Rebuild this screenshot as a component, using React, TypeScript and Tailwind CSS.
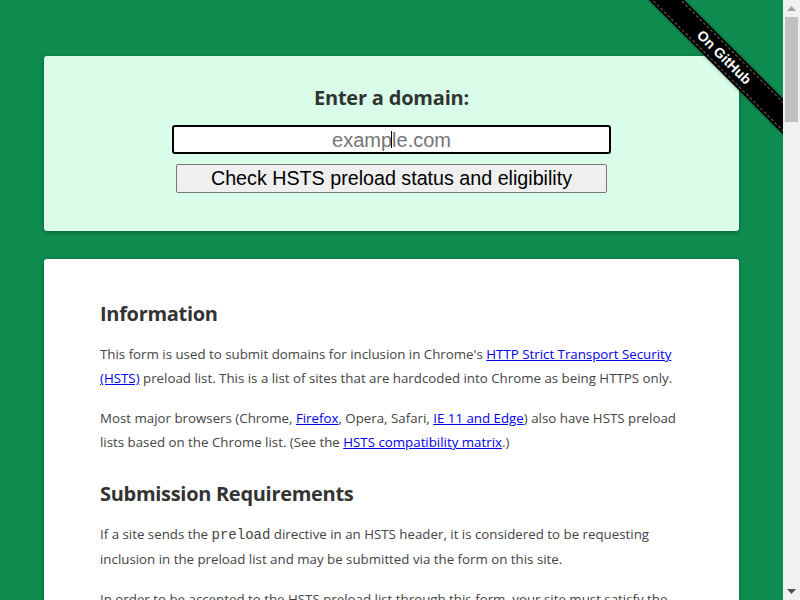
import React from "react";

const body = "font-['Open_Sans',sans-serif]";
const mono = "font-['Liberation_Mono',monospace] text-[14px]";

function A({ children }: { children: React.ReactNode }) {
  return <a href="#" className="text-[#0000ee] underline">{children}</a>;
}

function P({ children }: { children: React.ReactNode }) {
  return <p className="mt-[16px] text-[13.3px] leading-[24px] text-[#444]">{children}</p>;
}

function H2({ children, first }: { children: React.ReactNode; first?: boolean }) {
  return (
    <h2 className={`${first ? "" : "mt-[25px] "}text-[20px] tracking-[-0.3px] leading-[30px] font-bold text-[#333]`}>
      {children}
    </h2>
  );
}

function Scrollbar() {
  return (
    <div className="w-[17px] h-full bg-[#f1f1f1] flex flex-col items-center shrink-0">
      <div className="h-[17px] w-full flex items-center justify-center">
        <svg width="9" height="5" viewBox="0 0 9 5"><path d="M4.5 0L9 5H0z" fill="#a3a3a3" /></svg>
      </div>
      <div className="w-[13px] h-[105px] bg-[#c1c1c1]" />
      <div className="flex-1" />
      <div className="h-[17px] w-full flex items-center justify-center">
        <svg width="9" height="5" viewBox="0 0 9 5"><path d="M0 0H9L4.5 5z" fill="#505050" /></svg>
      </div>
    </div>
  );
}

export default function App() {
  return (
    <div className={`flex h-screen overflow-hidden ${body}`}>
      <div className="relative flex-1 h-full overflow-hidden bg-[#0f8c50]">
        <div className="pt-[56px] pb-[60px]">
          {/* Form card */}
          <div className="mx-[44px] rounded-[3px] bg-[#d9fde9] shadow-[0_1px_4px_rgba(0,0,0,0.35)] pt-[28px] pb-[38px] flex flex-col items-center">
            <h1 className="text-[20px] tracking-[-0.2px] leading-[28px] font-bold text-[#333]">Enter a domain:</h1>
            <div className="relative mt-[13px]">
              <input
                placeholder="example.com"
                className="block w-[439px] h-[29px] border-2 border-black rounded-[3px] bg-white text-center text-[20px] font-['Liberation_Sans',Arial,sans-serif] text-black placeholder:text-[#757575] outline-none"
              />
              <span className="absolute left-[219px] top-[6px] h-[17px] w-px bg-black pointer-events-none" />
            </div>
            <button className="mt-[10px] w-[431px] h-[29px] border border-[#767676] rounded-[2px] bg-[#efefef] text-[19.7px] leading-[27px] font-['Liberation_Sans',Arial,sans-serif] text-black">
              Check HSTS preload status and eligibility
            </button>
          </div>

          {/* Content card */}
          <div className="mx-[44px] mt-[28px] rounded-[3px] bg-white shadow-[0_1px_4px_rgba(0,0,0,0.35)] px-[56px] pt-[40px] pb-[48px]">
            <H2 first>Information</H2>
            <p className="mt-[13px] text-[13.3px] leading-[24px] text-[#444]">
              This form is used to submit domains for inclusion in Chrome's <A>HTTP Strict Transport Security (HSTS)</A> preload list. This is a list of sites that are hardcoded into Chrome as being HTTPS only.
            </p>
            <P>
              Most major browsers (Chrome, <A>Firefox</A>, Opera, Safari, <A>IE 11 and Edge</A>) also have HSTS preload lists based on the Chrome list. (See the <A>HSTS compatibility matrix</A>.)
            </P>

            <H2>Submission Requirements</H2>
            <p className="mt-[13px] text-[13.3px] leading-[24px] text-[#444]">
              If a site sends the <code className={mono}>preload</code> directive in an HSTS header, it is considered to be requesting inclusion in the preload list and may be submitted via the form on this site.
            </p>
            <P>
              In order to be accepted to the HSTS preload list through this form, your site must satisfy the following set of requirements:
            </P>
            <ol className="mt-[16px] list-decimal pl-[40px] text-[13.3px] leading-[24px] text-[#444]">
              <li>Serve a valid <strong>certificate</strong>.</li>
              <li><strong>Redirect</strong> from HTTP to HTTPS on the same host, if you are listening on port 80.</li>
              <li>Serve all <strong>subdomains</strong> over HTTPS.
                <ul className="list-disc pl-[40px]">
                  <li>In particular, you must support HTTPS for the <code className={mono}>www</code> subdomain if a DNS record for that subdomain exists.</li>
                </ul>
              </li>
              <li>Serve an <strong>HSTS header</strong> on the base domain for HTTPS requests:
                <ul className="list-disc pl-[40px]">
                  <li>The <code className={mono}>max-age</code> must be at least <code className={mono}>31536000</code> seconds (1 year).</li>
                  <li>The <code className={mono}>includeSubDomains</code> directive must be specified.</li>
                  <li>The <code className={mono}>preload</code> directive must be specified.</li>
                  <li>If you are serving an additional redirect from your HTTPS site, that redirect must still have the HSTS header (rather than the page it redirects to).</li>
                </ul>
              </li>
            </ol>
            <P>For more details on HSTS, please see <A>RFC 6797</A>. Here is an example of a valid HSTS header:</P>
            <pre className="mt-[16px] bg-[#f4f4f4] p-[12px] text-[13px] font-['Liberation_Mono',monospace] text-[#333]">Strict-Transport-Security: max-age=63072000; includeSubDomains; preload</pre>
            <P>You can check the status of your request by entering the domain name again in the form above, or consult the current Chrome preload list by visiting <code className={mono}>chrome://net-internals/#hsts</code> in your browser.</P>

            <H2>Deployment Recommendations</H2>
            <P>If your site is committed to HTTPS and you want to preload HSTS, we suggest the following steps:</P>
            <ol className="mt-[16px] list-decimal pl-[40px] text-[13.3px] leading-[24px] text-[#444]">
              <li>Examine all subdomains (and nested subdomains) of your site and make sure that they work properly over HTTPS.</li>
              <li>Add the Strict-Transport-Security header to all HTTPS responses and ramp up the max-age in stages.</li>
              <li>Once you're confident that there will be no more issues, increase the max-age to 2 years and submit your site to the preload list.</li>
            </ol>

            <H2>Removal</H2>
            <P>Be aware that inclusion in the preload list cannot really be undone. You can request to be removed via <A>the removal form</A>, but it will take months for the deletion to reach users with a Chrome update.</P>
          </div>
        </div>

        {/* Ribbon */}
        <div className="absolute right-0 top-0 w-[150px] h-[150px] overflow-hidden pointer-events-none">
          <div className="absolute left-[-19px] top-[45px] w-[220px] rotate-45 bg-black py-[2px] shadow-[0_0_3px_rgba(0,0,0,0.5)]">
            <div className="border-y border-dashed border-white/40 text-center text-white font-bold text-[14px] leading-[19px] font-['Liberation_Sans',Arial,sans-serif] [text-shadow:0_0_2px_rgba(0,0,0,0.8)]">
              On GitHub
            </div>
          </div>
        </div>
      </div>
      <Scrollbar />
    </div>
  );
}
